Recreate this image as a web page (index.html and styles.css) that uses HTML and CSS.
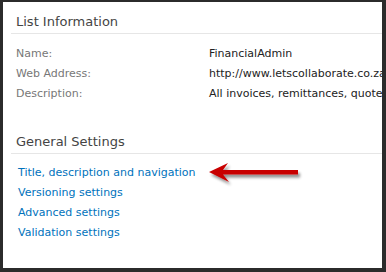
FILE: index.html
```
<!DOCTYPE html>
<html lang="en">
<head>
    <meta charset="UTF-8">
    <title>List Settings</title>
    <link rel="stylesheet" href="styles.css">
</head>
<body>
    <div class="frame">
        <div class="section">
            <h2 class="section-title">List Information</h2>
            <div class="info-row">
                <span class="info-label">Name:</span>
                <span class="info-value">FinancialAdmin</span>
            </div>
            <div class="info-row">
                <span class="info-label">Web Address:</span>
                <span class="info-value">http://www.letscollaborate.co.za/Lists/FinancialAdmin</span>
            </div>
            <div class="info-row">
                <span class="info-label">Description:</span>
                <span class="info-value">All invoices, remittances, quotes and statements</span>
            </div>
        </div>

        <div class="section section-general">
            <h2 class="section-title">General Settings</h2>
            <ul class="link-list">
                <li><a href="#">Title, description and navigation</a></li>
                <li><a href="#">Versioning settings</a></li>
                <li><a href="#">Advanced settings</a></li>
                <li><a href="#">Validation settings</a></li>
            </ul>
        </div>

        <!-- annotation arrow pointing at the first link -->
        <svg class="arrow" width="100" height="30" viewBox="0 0 100 30">
            <defs>
                <filter id="shadow" x="-20%" y="-40%" width="140%" height="180%">
                    <feGaussianBlur in="SourceAlpha" stdDeviation="1.5"/>
                    <feOffset dx="2" dy="3" result="blur"/>
                    <feComponentTransfer><feFuncA type="linear" slope="0.45"/></feComponentTransfer>
                    <feMerge><feMergeNode/><feMergeNode in="SourceGraphic"/></feMerge>
                </filter>
            </defs>
            <path d="M3 13 L22 4 L17 11 L92 11 L92 15.5 L17 15.5 L23 23 Z" fill="#c80000" filter="url(#shadow)"/>
        </svg>
    </div>
</body>
</html>
```

FILE: styles.css
```
* {
    margin: 0;
    padding: 0;
    box-sizing: border-box;
}

body {
    background: #2b2b2b;
    font-family: 'DejaVu Sans', Verdana, sans-serif;
    font-size: 11px;
    height: 272px;
    overflow: hidden;
}

.frame {
    position: relative;
    margin: 2px 4px 0 3px;
    height: 266px;
    background: #fff;
    padding-left: 8px;
    overflow: hidden;
}

.section-title {
    font-size: 13px;
    font-weight: normal;
    color: #444;
    padding: 12px 0 0 5px;
    height: 32px;
    border-bottom: 1px solid #e6e6e6;
    white-space: nowrap;
}

.info-row {
    display: flex;
    height: 20px;
    align-items: center;
    white-space: nowrap;
}

.section .info-row:nth-of-type(1) {
    margin-top: 9px;
}

.info-label {
    width: 198px;
    flex: none;
    padding-left: 5px;
    color: #777;
}

.info-value {
    color: #222;
}

.section-general {
    margin-top: 19px;
}

.link-list {
    list-style: none;
    padding: 9px 0 0 7px;
}

.link-list li {
    height: 20px;
    line-height: 20px;
}

.link-list a {
    color: #0072bc;
    text-decoration: none;
}

.arrow {
    position: absolute;
    left: 203px;
    top: 157px;
}
```
